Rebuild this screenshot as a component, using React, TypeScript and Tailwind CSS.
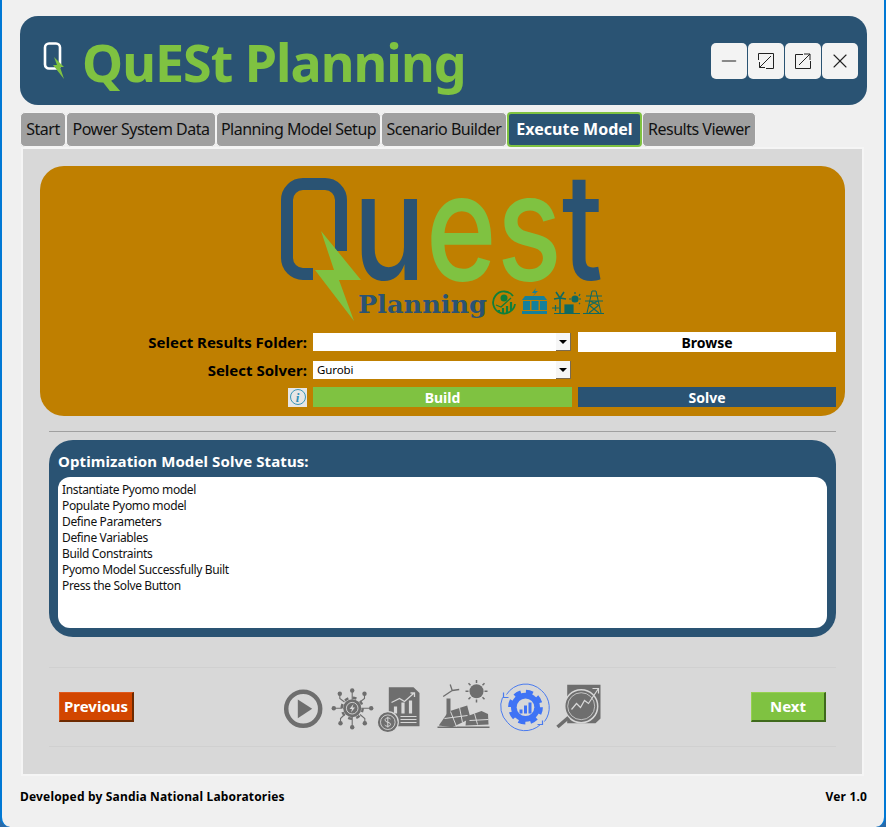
import React from "react";
import { Minus, X } from "lucide-react";

const tabs = ["Start", "Power System Data", "Planning Model Setup", "Scenario Builder", "Execute Model", "Results Viewer"];
const tabWidths = ["w-[46px]", "w-[150px]", "w-[165px]", "w-[126px]", "w-[135px]", "w-[114px]"];
const statusLines = [
  "Instantiate Pyomo model",
  "Populate Pyomo model",
  "Define Parameters",
  "Define Variables",
  "Build Constraints",
  "Pyomo Model Successfully Built",
  "Press the Solve Button",
];

const QuestLogo = () => (
  <svg width="360" height="165" viewBox="0 0 360 165" className="block">
    <path
      d="M81 85V34a16 16 0 0 0-16-16H43a16 16 0 0 0-16 16V92a16 16 0 0 0 16 16H53"
      fill="none"
      stroke="#2a5373"
      strokeWidth={12}
    />
    <polygon points="61,65 101,114 79,114 94,155 55,104 74,104" fill="#7fc241" />
    <text x="93" y="114" fontFamily="Inter, sans-serif" fontSize="148" fontWeight="500" textLength="250" lengthAdjust="spacingAndGlyphs">
      <tspan fill="#2a5373">u</tspan>
      <tspan fill="#7fc241">es</tspan>
      <tspan fill="#2a5373">t</tspan>
    </text>
    <text x="98" y="147" fill="#2a5373" fontFamily="'DejaVu Serif', serif" fontWeight="700" fontSize="25" textLength="129" lengthAdjust="spacingAndGlyphs">Planning</text>
    {/* money growth */}
    <g fill="none" stroke="#0f7f3a" strokeWidth="1.8">
      <path d="M253 130a11 11 0 1 0 2 8" />
      <circle cx="244" cy="132" r="3.5" fill="#0f7f3a" stroke="none" />
      <path d="M236 139l5 2 10-9" strokeWidth="1.3" />
      <path d="M239 147v-3M243 147v-5M247 147v-7M251 145v-9" strokeWidth="2.2" />
    </g>
    {/* battery building */}
    <g fill="#16809a">
      <polygon points="262,134 265,130 284,130 287,134" />
      <rect x="263" y="135" width="7" height="9" />
      <rect x="271.5" y="135" width="7" height="9" />
      <rect x="280" y="135" width="7" height="9" />
      <rect x="262" y="145" width="25" height="3" />
      <polygon points="276,122 272,127 275,127 273,130 278,125 275,125" />
    </g>
    {/* wind and solar */}
    <g fill="none" stroke="#0f6a62" strokeWidth="1.2">
      <path d="M300 132V147M300 132l-4-6M300 132l4-6M300 132l-6 1M300 132l6 1" strokeWidth="1.6" />
      <circle cx="315" cy="133" r="3" fill="#0f6a62" />
      <path d="M315 126v2M321 133h-2M320 128l-1 2M320 138l-1-1M309 133h2" />
      <path d="M294 147.500h26M292 142h7M295.500 139v6" />
      <rect x="305" y="139" width="8" height="8" fill="#0f6a62" />
    </g>
    {/* pylon */}
    <g fill="none" stroke="#0f6a62" strokeWidth="1.1">
      <path d="M332 125l-5 22M336 125l5 22M332 125h4M326 130h16M325 135h18M329 139l10 8M339 139l-10 8M330 135l8 4M338 135l-8 4M323 147.500h21" />
    </g>
  </svg>
);

const StepIcons = () => (
  <svg width="340" height="70" viewBox="2.5 -3.5 340 70" className="block">
    {/* start */}
    <circle cx="32.700" cy="33.300" r="17" fill="none" stroke="#6e6e6e" strokeWidth="4.500" />
    <polygon points="27.300,24 27.300,42.700 41.700,33.300" fill="#6e6e6e" />
    {/* power system */}
    <g fill="#6e6e6e">
      <path
        d="M81.700 15V24M81.700 41.500V51.700M63.300 32.700H72M91 32.700H100.700M69.300 18.300V23L74 26.500M94 18.300V23L89.500 26.500M70 47.700V43L74 39M94.300 47.700V43L89.500 39"
        fill="none"
        stroke="#6e6e6e"
        strokeWidth="1.1"
      />
      <circle cx="81.700" cy="32.700" r="9" />
      <circle cx="81.700" cy="32.700" r="10.500" fill="none" stroke="#6e6e6e" strokeWidth="2.400" strokeDasharray="4 4.250" />
      <circle cx="81.700" cy="15" r="2.200" />
      <circle cx="81.700" cy="51.700" r="2.200" />
      <circle cx="63.300" cy="32.700" r="2.200" />
      <circle cx="100.700" cy="32.700" r="2.200" />
      <circle cx="69.300" cy="18.300" r="2.200" />
      <circle cx="94" cy="18.300" r="2.200" />
      <circle cx="70" cy="47.700" r="2.200" />
      <circle cx="94.300" cy="47.700" r="2.200" />
      <circle cx="81.700" cy="32.700" r="5.800" fill="none" stroke="#d8d8d8" strokeWidth="0.900" />
      <polygon points="83,28.500 79,33.500 81.500,33.500 80.500,37 84.500,32 82,32" fill="#d8d8d8" />
    </g>
    {/* planning report */}
    <polygon points="118.300,11.700 143,11.700 149,17.500 149,50.700 118.300,50.700" fill="#6e6e6e" />
    <path d="M121 27l8-4 5 3 9-8M140 17.500h4v4" fill="none" stroke="#d8d8d8" strokeWidth="1.300" />
    <path d="M125 38V31M132.500 38V27M140 38V25" stroke="#d8d8d8" strokeWidth="3.200" />
    <path d="M130 41h16M130 44h16M130 47h16" stroke="#d8d8d8" strokeWidth="1.100" />
    <circle cx="117.300" cy="46.700" r="10.500" fill="#6e6e6e" stroke="#d8d8d8" strokeWidth="1.200" />
    <circle cx="117.300" cy="46.700" r="7.300" fill="none" stroke="#d8d8d8" strokeWidth="0.900" />
    <path d="M120 43.500c-1-1.500-5.500-1.500-5.500 1 0 3 5.500 1.500 5.500 4.300 0 2.500-4.500 2.500-5.800.7M117.300 41.300V52" fill="none" stroke="#d8d8d8" strokeWidth="1" />
    {/* scenario: wind, sun, solar */}
    <g fill="#6e6e6e">
      <rect x="176" y="23" width="4" height="21" />
      <path d="M181.700 15l-9 6M181.700 15l7-1M181.700 15l-2-6" stroke="#6e6e6e" strokeWidth="1.300" fill="none" />
      <circle cx="206" cy="15.700" r="7" />
      <path d="M206 4.500v3M206 24v3M195 15.700h3M214 15.700h3M198 7.700l2 2M212 21.700l2 2M214 7.700l-2 2M198 23.700l2-2" stroke="#6e6e6e" strokeWidth="1.500" />
      <polygon points="168.300,50 178,36 196.700,30 200,43 181.700,51.700" />
      <polygon points="196,41 211,35.500 217.500,38.500 218,49 195,50" />
      <rect x="167" y="51" width="52" height="1.500" />
      <path d="M174 43l23 -3M180 36l6 15M189 32l3 15M204 38l3 11M199 45l19-1" stroke="#d8d8d8" strokeWidth="1" fill="none" />
    </g>
    {/* execute, active */}
    <g>
      <path d="M236 19a22.700 22.700 0 0 1 35-4 22.700 22.700 0 0 1 3 31" fill="none" stroke="#4a7bef" strokeWidth="1" />
      <path d="M270 49a22.700 22.700 0 0 1-33-2 22.700 22.700 0 0 1-5-25" fill="none" stroke="#4a7bef" strokeWidth="1" />
      <path d="M233 17v5h5M267 49h5v-4" fill="none" stroke="#4a7bef" strokeWidth="1.200" />
      <circle cx="255" cy="31.700" r="14.500" fill="#3f73f5" />
      <circle cx="255" cy="31.700" r="15.500" fill="none" stroke="#3f73f5" strokeWidth="3.800" strokeDasharray="7 5.170" />
      <circle cx="255" cy="31.700" r="8.800" fill="#d8d8d8" />
      <path d="M250.500 38v-4M255 38v-8M259.500 38v-11" stroke="#3f73f5" strokeWidth="3" />
    </g>
    {/* results viewer */}
    <g>
      <polygon points="296.700,9.300 330,9.300 330,43 325,47.700 296.700,47.700" fill="#6e6e6e" />
      <circle cx="310.700" cy="30.700" r="16.500" fill="#6e6e6e" stroke="#d8d8d8" strokeWidth="1.500" />
      <circle cx="310.700" cy="30.700" r="13.500" fill="none" stroke="#d8d8d8" strokeWidth="0.800" />
      <path d="M301 34l5-6 4 4 4-7 4 3 10-15M322 13h6v5" fill="none" stroke="#d8d8d8" strokeWidth="1.200" />
      <path d="M298 42l-11 9.500" stroke="#6e6e6e" strokeWidth="3.600" />
    </g>
  </svg>
);

const Combo = ({ value }: { value?: string }) => (
  <div className="flex h-[18px] w-[258px] items-center bg-white">
    <span className="flex-1 pl-1 text-[11.5px] font-normal tracking-[-0.1px] text-black">{value}</span>
    <span className="flex h-[18px] w-[15px] items-center justify-center border-r border-b border-[#7a6a50] bg-[#f6f6f6]">
      <span className="h-0 w-0 border-x-[4px] border-t-[4px] border-x-transparent border-t-black" />
    </span>
  </div>
);

const BevelButton = ({ label, className }: { label: string; className: string }) => (
  <button className={`flex h-[30px] w-[75px] items-center justify-center border-t border-l border-r-2 border-b-2 text-[15px] font-bold text-white ${className}`}>
    {label}
  </button>
);

export default function App() {
  return (
    <div className="h-[827px] w-[886px] bg-[#2a6aa8]">
      <div
        className="flex h-[827px] w-[886px] flex-col overflow-hidden rounded-b-[10px] border-x-2 border-[#0078d4] bg-[#f0f0f0] pt-4 pl-[18px] text-black"
        style={{ fontFamily: "'Noto Sans', 'Open Sans', sans-serif" }}
      >
        {/* title bar */}
        <header className="flex h-[89px] w-[847px] items-center rounded-[18px] bg-[#2a5373] pr-[9px] pl-[23px]">
          <svg width="22" height="38" viewBox="0 0 22 38" className="block">
            <rect x="2" y="1.500" width="15" height="25" rx="4" fill="none" stroke="#ffffff" strokeWidth="2.600" />
            <polygon points="11,15 21,25 17,25 21,37 10,23 14,23" fill="#7fc241" />
          </svg>
          <h1 className="ml-[17px] flex-1 pt-[3px] text-[52px] leading-none font-bold tracking-[-1px] text-[#7fc241]">QuESt Planning</h1>
          <div className="flex gap-px">
            <button className="flex size-9 items-center justify-center rounded-[5px] bg-[#f3f3f3] text-[#888888]">
              <Minus size={22} strokeWidth={2} />
            </button>
            <button className="flex size-9 items-center justify-center rounded-[5px] bg-[#f3f3f3]">
              <svg width="18" height="18" viewBox="0 0 18 18" fill="none" stroke="#222222" strokeWidth="1">
                <path d="M1.500 8V1.500H16.500V16.500H9M14 4L2.500 15.500M2.500 10V15.500H8" />
              </svg>
            </button>
            <button className="flex size-9 items-center justify-center rounded-[5px] bg-[#f3f3f3]">
              <svg width="18" height="18" viewBox="0 0 18 18" fill="none" stroke="#222222" strokeWidth="1">
                <path d="M9 2.500H1.500V16.500H16.500V9M5 13L16 2M10 2H16V8" />
              </svg>
            </button>
            <button className="flex size-9 items-center justify-center rounded-[5px] bg-[#f3f3f3] text-[#222222]">
              <X size={24} strokeWidth={1.1} />
            </button>
          </div>
        </header>

        {/* tabs */}
        <nav className="mt-[7px] flex h-[35px] items-center">
          {tabs.map((tab, i) =>
            tab === "Execute Model" ? (
              <div key={tab} className={`flex h-[35px] items-center justify-center rounded-[4px] border-2 border-[#7fc241] bg-[#2a5373] pb-px text-[16px] font-bold text-white ${tabWidths[i]}`}>
                {tab}
              </div>
            ) : (
              <div key={tab} className={`flex h-[35px] items-center justify-center rounded-[5px] border border-[#f4f4f4] bg-[#a0a0a0] pb-px text-[16px] tracking-[-0.5px] text-[#111111] ${tabWidths[i]}`}>
                {tab}
              </div>
            )
          )}
        </nav>

        {/* page */}
        <main className="ml-px flex h-[629px] w-[843px] flex-col border-2 border-[#f5f5f5] bg-[#d8d8d8] pt-[17px] pl-[17px]">
          <section className="flex h-[250px] w-[805px] flex-col rounded-[24px] bg-[#bf7f00]">
            <div className="flex h-[165px] justify-center pr-[5px]">
              <QuestLogo />
            </div>
            <div className="grid grid-cols-[267px_258px_258px] items-center gap-x-[6px] text-[15px] font-bold">
              <label className="h-[22px] text-right leading-[22px]">Select Results Folder:</label>
              <Combo />
              <button className="ml-px flex h-[20px] w-[258px] items-center justify-center bg-white text-[14px]">Browse</button>
            </div>
            <div className="mt-[6px] grid grid-cols-[267px_258px_258px] items-center gap-x-[6px] text-[15px] font-bold">
              <label className="h-[22px] text-right leading-[22px]">Select Solver:</label>
              <Combo value="Gurobi" />
            </div>
            <div className="mt-[6px] grid grid-cols-[267px_258px_258px] items-center gap-x-[6px]">
              <div className="flex justify-end">
                <span className="flex size-[19px] items-center justify-center bg-[#e6e6e6]">
                  <span className="flex size-[16px] items-center justify-center rounded-full border border-[#3a97b8] text-[13px] leading-none font-bold text-[#2f8fb5] italic" style={{ fontFamily: "'Liberation Serif', serif" }}>i</span>
                </span>
              </div>
              <button className="flex h-[20px] w-[259px] items-center justify-center bg-[#7fc241] text-[14px] font-bold text-white">Build</button>
              <button className="ml-px flex h-[20px] w-[258px] items-center justify-center bg-[#2a5373] text-[14px] font-bold text-white">Solve</button>
            </div>
          </section>

          <hr className="mt-[15px] ml-[9px] w-[787px] border-t border-[#a0a0a0]" />

          <section className="mt-2 ml-[9px] flex h-[197px] w-[787px] flex-col rounded-[24px] bg-[#2a5373] px-[9px] pb-[9px]">
            <h2 className="flex h-[37px] items-end pb-[5px] text-[15px] font-bold tracking-[0.1px] text-white">Optimization Model Solve Status:</h2>
            <div className="flex-1 rounded-[12px] bg-white px-1 pt-[5px] text-[12px] leading-4 tracking-[-0.35px] text-[#111111]">
              {statusLines.map((line) => (
                <div key={line}>{line}</div>
              ))}
            </div>
          </section>

          {/* step navigation */}
          <div className="mt-[30px] ml-[9px] flex h-[80px] w-[787px] items-center justify-between border-y border-[#d0d0d0] px-[10px]">
            <BevelButton label="Previous" className="border-t-[#e0581c] border-l-[#e0581c] border-r-[#6e2a00] border-b-[#6e2a00] bg-[#d24600]" />
            <StepIcons />
            <BevelButton label="Next" className="border-t-[#96d050] border-l-[#96d050] border-r-[#3f6a1c] border-b-[#3f6a1c] bg-[#7fc241]" />
          </div>
        </main>

        <footer className="mt-[11px] flex w-[847px] items-center justify-between text-[12px] leading-5 font-bold tracking-[0.17px]">
          <span>Developed by Sandia National Laboratories</span>
          <span>Ver 1.0</span>
        </footer>
      </div>
    </div>
  );
}
